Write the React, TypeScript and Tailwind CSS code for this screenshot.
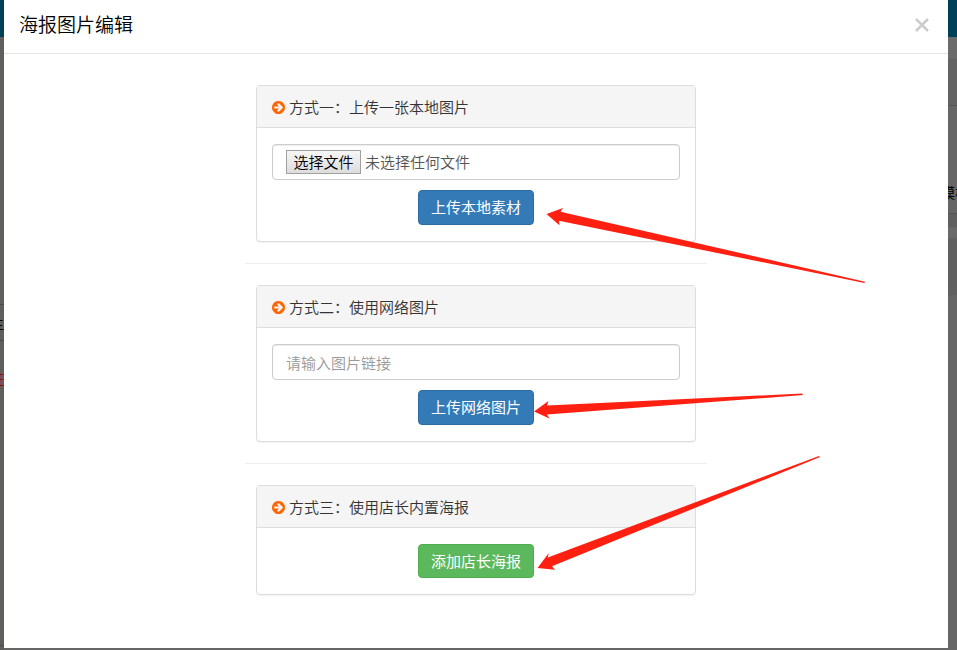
import React from "react";

function ArrowCircleIcon() {
  return (
    <svg viewBox="128 128 1536 1536" className="size-[13px] shrink-0 fill-[#ff6600]" aria-hidden="true">
      <path d="M1413 896q0-27-18-45l-91-91-362-362q-18-18-45-18t-45 18l-91 91q-18 18-18 45t18 45l189 189h-502q-26 0-45 19t-19 45v128q0 26 19 45t45 19h502l-189 189q-19 19-19 45t19 45l91 91q18 18 45 18t45-18l362-362 91-91q18-18 18-45zm251 0q0 209-103 385.500t-279.500 279.500-385.500 103-385.500-103-279.500-279.500-103-385.500 103-385.500 279.500-279.500 385.500-103 385.500 103 279.500 279.500 103 385.500z" />
    </svg>
  );
}

function Panel({ title, children }: { title: string; children: React.ReactNode }) {
  return (
    <section className="mx-[11px] rounded border border-[#ddd] bg-white shadow-[0_1px_1px_rgba(0,0,0,0.05)]">
      <h2 className="flex h-[42px] items-center gap-1 rounded-t-[3px] border-b border-[#ddd] bg-[#f5f5f5] px-[15px] pt-[2px] text-[15px] font-[350] text-[#333]">
        <ArrowCircleIcon />
        {title}
      </h2>
      <div className="flex flex-col items-center gap-[10px] px-[15px] py-4">{children}</div>
    </section>
  );
}

function Divider() {
  return <hr className="my-[21px] border-t border-[#eee]" />;
}

const field =
  "flex h-9 w-full items-center rounded border border-[#ccc] bg-white px-[13px] text-[15px] font-[350] text-[#555] shadow-[inset_0_1px_1px_rgba(0,0,0,0.075)]";
const primary =
  "h-[35px] rounded border border-[#2e6da4] bg-[#337ab7] px-3 text-[15px] text-white";
const success =
  "h-[34px] rounded border border-[#4cae4c] bg-[#5cb85c] px-3 text-[15px] text-white";

/* Dimmed page that shows round the edges of the dialog */
function Backdrop() {
  return (
    <div className="absolute inset-0 flex flex-col overflow-hidden bg-[#666]" aria-hidden="true">
      <div className="h-[37px] shrink-0 bg-[#004058]" />
      <div className="flex grow justify-between text-sm leading-5 whitespace-nowrap text-black">
        <div className="flex w-1 flex-col items-end overflow-hidden bg-[#615f5c]">
          <div className="h-[268px] w-full shrink-0 border-b border-[#4d4b49]" />
          <div className="flex h-9 w-full shrink-0 items-center justify-end border-b border-[#4d4b49]">主</div>
          <div className="mt-7 text-[#900]">证</div>
          <div className="mt-auto mb-1 h-px w-full bg-[#4d4b49]" />
        </div>
        <div className="flex w-4 flex-col overflow-hidden">
          <div className="h-[22px] shrink-0 bg-[#6b6b6b]" />
          <div className="h-[47px] shrink-0 border-b border-[#555] bg-[#636363]" />
          <div className="flex h-[108px] shrink-0 items-end border-b border-[#555] pb-[11px]">模板</div>
          <div className="h-[13px] shrink-0 bg-[#606060]" />
          <div className="h-[11px] shrink-0 bg-[#6a6a6a]" />
          <div className="h-[57px] shrink-0 bg-[#606060]" />
          <div className="grow bg-[#666]" />
        </div>
      </div>
    </div>
  );
}

/* Hand-placed pointers drawn over the dialog */
function Pointers() {
  return (
    <svg
      className="pointer-events-none absolute top-0 left-0 fill-[#ff2012]"
      width="957"
      height="650"
      viewBox="0 0 957 650"
      aria-hidden="true"
    >
      <polygon points="546.5,214 563,208 560.5,211.7 865,281.7 864.5,283 559,220.7 559.5,225.3" />
      <polygon points="534,411.5 548.5,401 547,405.5 802,393.6 803,395 547,414.6 549.5,418.5" />
      <polygon points="537.5,568 548.8,553 547.8,557.6 819,456 820,457 552,566.2 555,569.8" />
    </svg>
  );
}

export default function App() {
  return (
    <div className="relative min-h-screen pr-[9px] pb-[2px] pl-1 font-['Noto_Sans_CJK_SC',sans-serif]">
      <Backdrop />
      <main role="dialog" aria-labelledby="dialog-title" className="relative flex min-h-[calc(100vh-2px)] flex-col bg-white">
        <header className="flex h-[54px] items-center justify-between border-b border-[#e5e5e5] pr-4 pb-1 pl-[15px]">
          <h1 id="dialog-title" className="text-[19px] font-[350] text-black">
            海报图片编辑
          </h1>
          <button type="button" aria-label="关闭" className="flex size-5 items-center justify-center text-[#ccc]">
            <svg viewBox="0 0 14 14" className="size-[14px] stroke-current stroke-[2.500]" aria-hidden="true">
              <path d="M1 1 13 13M13 1 1 13" />
            </svg>
          </button>
        </header>
        <div className="mx-auto w-[462px] max-w-full pt-[31px] pb-[53px]">
          <Panel title="方式一：上传一张本地图片">
            <label className={field}>
              <input type="file" className="sr-only" />
              <span className="mr-1 flex h-6 w-[75px] items-center justify-center border border-[#a0a0a0] bg-linear-to-b from-[#f6f6f6] to-[#dddddd] text-black">
                选择文件
              </span>
              未选择任何文件
            </label>
            <button type="button" className={primary}>上传本地素材</button>
          </Panel>
          <Divider />
          <Panel title="方式二：使用网络图片">
            <input type="text" aria-label="图片链接" placeholder="请输入图片链接" className={`${field} placeholder:text-[#999]`} />
            <button type="button" className={primary}>上传网络图片</button>
          </Panel>
          <Divider />
          <Panel title="方式三：使用店长内置海报">
            <button type="button" className={success}>添加店长海报</button>
          </Panel>
        </div>
      </main>
      <Pointers />
    </div>
  );
}
